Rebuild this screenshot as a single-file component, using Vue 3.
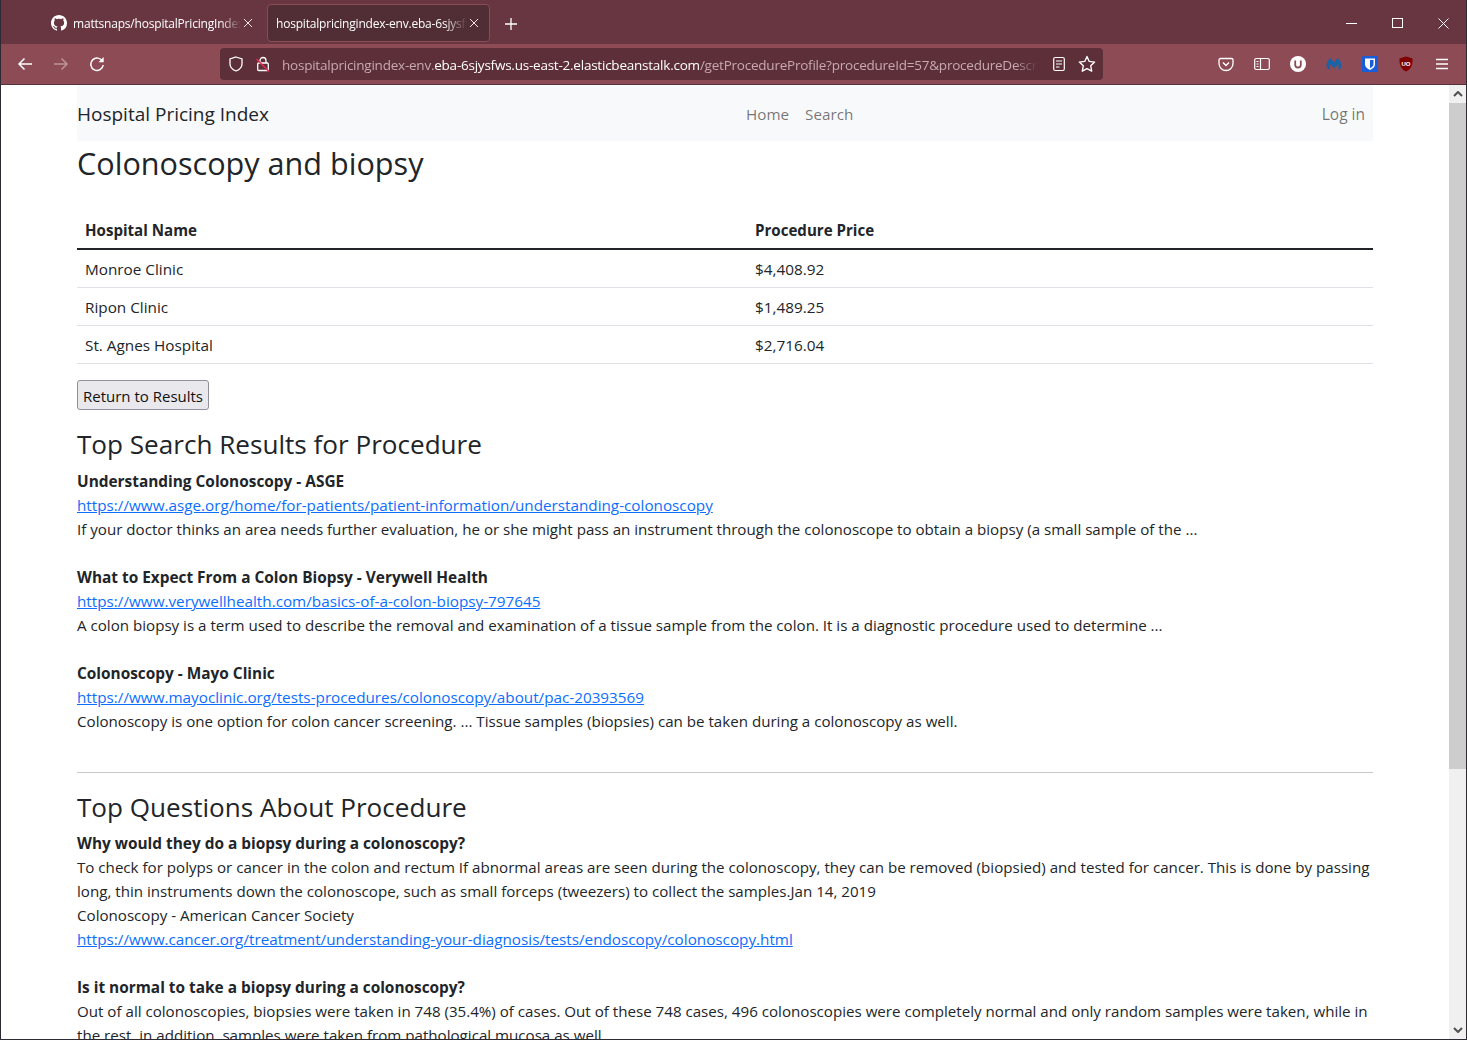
<script setup>
const rows = [
  ['Monroe Clinic', '$4,408.92'],
  ['Ripon Clinic', '$1,489.25'],
  ['St. Agnes Hospital', '$2,716.04'],
]
const results = [
  ['Understanding Colonoscopy - ASGE', 'https://www.asge.org/home/for-patients/patient-information/understanding-colonoscopy', 'If your doctor thinks an area needs further evaluation, he or she might pass an instrument through the colonoscope to obtain a biopsy (a small sample of the ...'],
  ['What to Expect From a Colon Biopsy - Verywell Health', 'https://www.verywellhealth.com/basics-of-a-colon-biopsy-797645', 'A colon biopsy is a term used to describe the removal and examination of a tissue sample from the colon. It is a diagnostic procedure used to determine ...'],
  ['Colonoscopy - Mayo Clinic', 'https://www.mayoclinic.org/tests-procedures/colonoscopy/about/pac-20393569', 'Colonoscopy is one option for colon cancer screening. ... Tissue samples (biopsies) can be taken during a colonoscopy as well.'],
]
</script>

<template>
  <div class="window">
    <header class="chrome">
      <div class="tabbar">
        <div class="tab">
          <svg class="gh" viewBox="0 0 16 16" width="16" height="16"><path fill="#fff" d="M8 0C3.58 0 0 3.58 0 8c0 3.54 2.29 6.53 5.47 7.59.4.07.55-.17.55-.38 0-.19-.01-.82-.01-1.49-2.01.37-2.53-.49-2.69-.94-.09-.23-.48-.94-.82-1.13-.28-.15-.68-.52-.01-.53.63-.01 1.08.58 1.23.82.72 1.21 1.87.87 2.33.66.07-.52.28-.87.51-1.07-1.78-.2-3.64-.89-3.64-3.95 0-.87.31-1.59.82-2.15-.08-.2-.36-1.02.08-2.12 0 0 .67-.21 2.2.82.64-.18 1.32-.27 2-.27s1.36.09 2 .27c1.53-1.04 2.2-.82 2.2-.82.44 1.1.16 1.92.08 2.12.51.56.82 1.27.82 2.15 0 3.07-1.87 3.75-3.65 3.95.29.25.54.73.54 1.48 0 1.07-.01 1.93-.01 2.2 0 .21.15.46.55.38A8.01 8.01 0 0 0 16 8c0-4.42-3.58-8-8-8z"/></svg>
          <span class="tab-title fade">mattsnaps/hospitalPricingIndex</span>
          <svg class="x" viewBox="0 0 10 10" width="10" height="10"><path d="M1 1l8 8M9 1l-8 8" stroke="#f2e6e8" fill="none"/></svg>
        </div>
        <div class="tab active">
          <span class="tab-title fade">hospitalpricingindex-env.eba-6sjysfws</span>
          <svg class="x" viewBox="0 0 10 10" width="10" height="10"><path d="M1 1l8 8M9 1l-8 8" stroke="#f2e6e8" fill="none"/></svg>
        </div>
        <svg class="plus" viewBox="0 0 12 12" width="12" height="12"><path d="M6 0v12M0 6h12" stroke="#fff" stroke-width="1.3" fill="none"/></svg>
        <div class="winbtns">
          <svg viewBox="0 0 11 11" width="11" height="11"><path d="M0 5.5h11" stroke="#fff" fill="none"/></svg>
          <svg viewBox="0 0 11 11" width="11" height="11"><rect x=".5" y=".5" width="10" height="9" stroke="#fff" fill="none"/></svg>
          <svg viewBox="0 0 11 11" width="11" height="11"><path d="M.5.5l10 10M10.500.5l-10 10" stroke="#fff" fill="none"/></svg>
        </div>
      </div>
      <div class="toolbar">
        <svg class="nav" viewBox="0 0 16 16" width="16" height="16"><path d="M15 8H2M7.500 2.500L2 8l5.500 5.500" stroke="#fff" stroke-width="1.5" fill="none"/></svg>
        <svg class="nav dim" viewBox="0 0 16 16" width="16" height="16"><path d="M1 8h13M8.500 2.500L14 8l-5.500 5.500" stroke="#fff" stroke-width="1.5" fill="none"/></svg>
        <svg class="nav" viewBox="0 0 16 16" width="16" height="16"><path d="M13.600 5.500A6.200 6.200 0 1 0 14.200 9" stroke="#fff" stroke-width="1.5" fill="none"/><path d="M14.700 1v5.200H9.500z" fill="#fff"/></svg>
        <div class="urlbar">
          <svg viewBox="0 0 16 16" width="16" height="16"><path d="M8 1l6 2v5c0 3.500-2.500 5.600-6 7-3.500-1.400-6-3.500-6-7V3z" stroke="#fff" stroke-width="1.300" fill="none"/></svg>
          <svg class="lock" viewBox="0 0 16 16" width="16" height="16"><path d="M5 7V4.500a3 3 0 0 1 6 0V7" stroke="#fff" stroke-width="1.300" fill="none"/><rect x="2.700" y="7" width="10.600" height="7.500" rx="1" stroke="#fff" stroke-width="1.300" fill="none"/><path d="M1.500 3L14 15.500" stroke="#e22850" stroke-width="1.500"/></svg>
          <div class="url"><span class="dimurl">hospitalpricingindex-env.</span>eba-6sjysfws.us-east-2.elasticbeanstalk.com<span class="dimurl">/getProcedureProfile?procedureId=57&amp;procedureDescription=Colonoscopy</span></div>
          <svg class="reader" viewBox="0 0 16 16" width="16" height="16"><rect x="2.700" y="1.500" width="10.600" height="13" rx="1.500" stroke="#fff" stroke-width="1.200" fill="none"/><path d="M5 5h6M5 8h6M5 11h3.500" stroke="#fff" stroke-width="1.200"/></svg>
          <svg viewBox="0 0 16 16" width="18" height="18"><path d="M8 1.300l2 4.400 4.800.6-3.500 3.300.9 4.800L8 12.100l-4.200 2.300.9-4.800L1.200 6.300 6 5.700z" stroke="#fff" stroke-width="1.200" fill="none" stroke-linejoin="round"/></svg>
        </div>
        <div class="tools">
          <svg viewBox="0 0 16 16" width="16" height="16"><path d="M2.500 2.500h11A1.500 1.500 0 0 1 15 4v3.500a7 7 0 0 1-14 0V4a1.500 1.500 0 0 1 1.500-1.500z" stroke="#fff" stroke-width="1.300" fill="none"/><path d="M5 6.500l3 3 3-3" stroke="#fff" stroke-width="1.500" fill="none"/></svg>
          <svg viewBox="0 0 16 16" width="16" height="16"><rect x=".7" y="2.500" width="14.600" height="11" rx="1.500" stroke="#fff" stroke-width="1.200" fill="none"/><path d="M6.500 2.500v11M2.500 5.500h2M2.500 8h2M2.500 10.500h2" stroke="#fff" stroke-width="1.200"/></svg>
          <svg viewBox="0 0 16 16" width="16" height="16"><circle cx="8" cy="8" r="8" fill="#fff"/><path d="M5.200 4.500v4.200a2.800 2.800 0 0 0 5.600 0V4.500" stroke="#8e4b55" stroke-width="1.800" fill="none"/></svg>
          <svg viewBox="0 0 16 16" width="16" height="16"><path d="M4.500 2L8 6.500 11.500 2C14 4 15.500 7 15.500 9.500c0 2-1 3.500-3 4.500V8L8 12.500 4 8v6c-2-1-3.500-2.500-3.500-4.500C.5 7 2 4 4.500 2z" fill="#1b63a8"/></svg>
          <svg viewBox="0 0 16 16" width="16" height="16"><rect width="16" height="16" rx="1.500" fill="#175ddc"/><path d="M3 2.500h10v6c0 2.500-2.500 4.200-5 5.500-2.500-1.300-5-3-5-5.500z" fill="#fff"/><path d="M8 4h3.500v4.500c0 1.500-1.700 2.700-3.500 3.700z" fill="#175ddc"/></svg>
          <svg viewBox="0 0 16 16" width="16" height="16"><path d="M8 .5l6.500 2c.3 6-1 10.500-6.500 13C2.500 13 1.200 8.500 1.500 2.500z" fill="#800000"/><text x="8" y="10" text-anchor="middle" class="ublock">UO</text></svg>
          <svg viewBox="0 0 16 16" width="16" height="16"><path d="M2 3.500h12M2 8h12M2 12.500h12" stroke="#fff" stroke-width="1.500"/></svg>
        </div>
      </div>
    </header>

    <div class="viewport">
      <main class="page">
        <div class="container">
          <nav class="navbar">
            <a class="brand">Hospital Pricing Index</a>
            <div class="navlinks"><a>Home</a><a>Search</a></div>
            <a class="login">Log in</a>
          </nav>
          <h1>Colonoscopy and biopsy</h1>
          <table>
            <thead><tr><th>Hospital Name</th><th>Procedure Price</th></tr></thead>
            <tbody>
              <tr v-for="r in rows" :key="r[0]"><td>{{ r[0] }}</td><td>{{ r[1] }}</td></tr>
            </tbody>
          </table>
          <button class="btn">Return to Results</button>
          <h2 class="first">Top Search Results for Procedure</h2>
          <div v-for="r in results" :key="r[0]" class="item">
            <strong>{{ r[0] }}</strong>
            <a class="link">{{ r[1] }}</a>
            <div>{{ r[2] }}</div>
          </div>
          <hr>
          <h2 class="second">Top Questions About Procedure</h2>
          <div class="item">
            <strong>Why would they do a biopsy during a colonoscopy?</strong>
            <div>To check for polyps or cancer in the colon and rectum If abnormal areas are seen during the colonoscopy, they can be removed (biopsied) and tested for cancer. This is done by passing long, thin instruments down the colonoscope, such as small forceps (tweezers) to collect the samples.Jan 14, 2019</div>
            <div>Colonoscopy - American Cancer Society</div>
            <a class="link">https://www.cancer.org/treatment/understanding-your-diagnosis/tests/endoscopy/colonoscopy.html</a>
          </div>
          <div class="item">
            <strong>Is it normal to take a biopsy during a colonoscopy?</strong>
            <div>Out of all colonoscopies, biopsies were taken in 748 (35.4%) of cases. Out of these 748 cases, 496 colonoscopies were completely normal and only random samples were taken, while in the rest, in addition, samples were taken from pathological mucosa as well.</div>
          </div>
        </div>
      </main>
      <div class="scrollbar">
        <svg viewBox="0 0 10 6" width="10" height="6" class="arrow"><path d="M1 5l4-4 4 4" stroke="#505050" stroke-width="2" fill="none"/></svg>
        <div class="track"><div class="thumb"></div></div>
        <svg viewBox="0 0 10 6" width="10" height="6" class="arrow"><path d="M1 1l4 4 4-4" stroke="#505050" stroke-width="2" fill="none"/></svg>
      </div>
    </div>
  </div>
</template>

<style>
html, body { margin: 0; height: 100%; overflow: hidden; background: #fff; }
</style>

<style scoped>
.window {
  width: 1467px; height: 1040px; box-sizing: border-box; display: flex; flex-direction: column;
  border-left: 1px solid #2e2a33; border-right: 1px solid #2e2a33; border-bottom: 1px solid #2e2a33;
  font-family: "Open Sans", "Noto Sans", sans-serif; color: #212529; overflow: hidden;
}
.chrome { flex: none; height: 85px; background: #8d4b55; border-bottom: 1px solid #54323b; box-sizing: border-box; color: #fff; }
.tabbar { height: 44px; background: #673640; display: flex; align-items: center; padding: 3px 0 0 41px; box-sizing: border-box; font-size: 12px; }
.tab { width: 222px; height: 38px; margin-top: -1px; display: flex; align-items: center; box-sizing: border-box; padding: 0 9px; border-radius: 4px; border: 1px solid transparent; }
.tab.active { width: 223px; background: #512e36; border-color: #8d4b55; margin-left: 3px; padding-left: 8px; }
.gh { flex: none; margin-right: 6px; margin-left: -1px; }
.tab-title { flex: 1; white-space: nowrap; overflow: hidden; letter-spacing: -0.2px; }
.fade { -webkit-mask-image: linear-gradient(to right, #000 88%, transparent); mask-image: linear-gradient(to right, #000 88%, transparent); }
.x { flex: none; margin-left: 2px; margin-right: 1px; }
.plus { margin-left: 15px; }
.winbtns { margin-left: auto; display: flex; gap: 35px; padding-right: 17px; }
.toolbar { height: 40px; display: flex; align-items: center; padding-left: 16px; }
.nav { flex: none; margin-right: 20px; }
.nav.dim { opacity: .4; }
.urlbar { flex: none; margin-left: 95px; width: 883px; height: 32px; border-radius: 4px; background: #5c2f39; display: flex; align-items: center; gap: 12px; padding: 0 7px 0 8px; box-sizing: border-box; font-size: 13.5px; }
.lock { margin-left: -1px; }
.reader { margin-left: 1px; margin-right: -1px; }
.url { flex: 1; margin-left: -1px; overflow: hidden; white-space: nowrap; letter-spacing: -0.23px; padding-top: 2px; -webkit-mask-image: linear-gradient(to right, #000 97%, transparent); mask-image: linear-gradient(to right, #000 97%, transparent); }
.dimurl { color: #c8aab0; }
.tools { flex: none; display: flex; gap: 20px; margin-left: 115px; }
.ublock { font: 700 6px "Liberation Sans", sans-serif; fill: #fff; }

.viewport { flex: 1; min-height: 0; display: flex; }
.page { flex: 1; min-width: 0; overflow: hidden; }
.container { width: 1296px; margin-left: 76px; font-size: 15.14px; line-height: 24px; }
.navbar { height: 56px; box-sizing: border-box; padding: 2px 8px 0 0; background: #f8f9fa; display: flex; align-items: center; }
.brand { font-size: 19px; }
.navlinks { display: flex; gap: 16px; color: rgba(0,0,0,.55); margin-left: 477px; font-size: 15.25px; }
.login { margin-left: auto; color: rgba(0,0,0,.55); font-size: 15.5px; }
h1 { font-size: 30.6px; line-height: 44px; font-weight: 400; margin: 0 0 27px; }
table { width: 100%; border-collapse: collapse; margin-bottom: 16px; }
th { text-align: left; font-weight: 700; padding: 6px 8px; border-bottom: 2px solid #212529; height: 24px; font-size: 15.1px; }
th:first-child, td:first-child { width: 654px; }
td { padding: 7px 8px 6px; border-bottom: 1px solid #dee2e6; font-size: 15.3px; }
.btn { display: block; width: 132px; height: 30px; padding: 1px 0 0; box-sizing: border-box; border: 1px solid #8f8f9d; border-radius: 3px; background: #e9e9ed; font: inherit; font-size: 15px; color: #111; }
h2 { font-size: 26.1px; line-height: 38px; font-weight: 400; margin: 0 0 6px; }
h2.first { margin-top: 15px; }
h2.second { margin-bottom: 5px; }
.item { margin-bottom: 24px; }
strong { display: block; font-weight: 700; font-size: 15.4px; padding-top: 1px; margin-bottom: -1px; }
.link { display: block; color: #0d6efd; text-decoration: underline; font-size: 15.25px; }
hr { margin: 39px 0 15px; border: 0; border-top: 1px solid #c8c8c9; }
.scrollbar { flex: none; width: 17px; background: #f0f0f0; display: flex; flex-direction: column; align-items: center; margin-right: 0; }
.arrow { flex: none; margin: 6px 0; }
.track { flex: 1; width: 100%; }
.thumb { height: 666px; background: #cdcdcd; }
</style>
